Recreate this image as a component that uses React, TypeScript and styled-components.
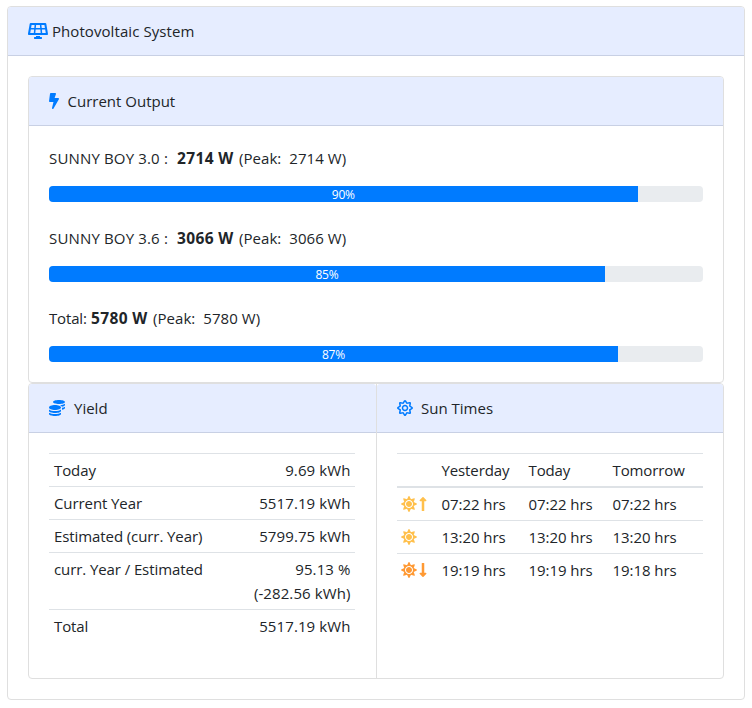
import React from 'react';
import styled, { createGlobalStyle } from 'styled-components';
import { FaBolt, FaCoins, FaLongArrowAltDown, FaLongArrowAltUp, FaRegSun, FaSolarPanel, FaSun } from 'react-icons/fa';

const GlobalStyle = createGlobalStyle`
  *, *::before, *::after { box-sizing: border-box; }
  body {
    margin: 0;
    background: #fff;
    color: #212529;
    font: 400 15px/24px "Open Sans", "Noto Sans", sans-serif;
  }
`;

const Page = styled.main`
  padding: 6px 7px 8px;
`;

const Card = styled.section`
  border: 1px solid #dfdfdf;
  border-radius: 4px;
  background: #fff;
`;

const CardGroup = styled(Card)`
  display: grid;
  grid-template-columns: 348px 1fr;
`;

const GroupPanel = styled.div`
  &:first-child {
    border-right: 1px solid #dfdfdf;
  }
`;

const CardHeader = styled.header<{ $icon: number; $gap: number }>`
  display: flex;
  align-items: center;
  gap: ${({ $gap }) => $gap}px;
  height: 49px;
  padding: 0 20px;
  border-bottom: 1px solid #c8d0e4;
  border-radius: 3px 3px 0 0;
  background: #e6edff;

  svg {
    flex: none;
    width: ${({ $icon }) => $icon}px;
    height: 16px;
    color: #007bff;
  }
`;

const CardBody = styled.div<{ $right?: number }>`
  padding: 20px ${({ $right = 20 }) => $right}px 20px 20px;
`;

const Text = styled.span<{ $track?: number }>`
  letter-spacing: ${({ $track = 0 }) => $track}px;
  white-space: pre;
`;

const Strong = styled.strong`
  width: 58px;
  font-size: 15.5px;
  font-weight: 700;
  letter-spacing: 0.35px;
  white-space: pre;
`;

const Meter = styled.div`
  & + & {
    margin-top: 24px;
  }
`;

const MeterLabel = styled.p`
  display: flex;
  align-items: baseline;
  height: 24px;
  margin: 0 0 16px;
`;

const LabelName = styled.span<{ $width: number; $track: number }>`
  width: ${({ $width }) => $width}px;
  letter-spacing: ${({ $track }) => $track}px;
  white-space: pre;
`;

const Track = styled.div`
  height: 16px;
  overflow: hidden;
  border-radius: 4px;
  background: #e9ecef;
`;

const Fill = styled.div`
  height: 16px;
  background: #007bff;
  color: #fff;
  font-size: 12px;
  line-height: 17px;
  letter-spacing: -0.2px;
  text-align: center;
`;

const YieldTable = styled.dl`
  margin: 0 0 16px;
`;

const YieldRow = styled.div`
  display: flex;
  justify-content: space-between;
  padding: 4px 4.5px 4px 4px;
  border-top: 1px solid #dee2e6;
`;

const Term = styled.dt`
  padding-left: 1px;
  letter-spacing: -0.09px;
`;

const Value = styled.dd`
  margin: 0;
  letter-spacing: 0.1px;
  text-align: right;
  white-space: pre-line;
`;

const SunRow = styled.div<{ $head?: boolean }>`
  display: grid;
  grid-template-columns: 40.5px 87px 84px 1fr;
  min-height: 33px;
  padding: 4px;
  border-top: 1px solid #dee2e6;
  ${({ $head }) => $head && 'border-bottom: 2px solid #dee2e6;'}
`;

const SunTable = styled.div`
  ${SunRow}:nth-child(2) {
    min-height: 32px;
    border-top: 0;
  }
`;

const SunIcon = styled.span<{ $color: string }>`
  display: flex;
  align-items: center;
  gap: 2px;
  color: ${({ $color }) => $color};

  svg {
    flex: none;
    width: 16px;
    height: 16px;
  }

  svg + svg {
    width: 8px;
  }
`;

const meters = [
  { name: 'SUNNY BOY 3.0 :', width: 128, track: 0.16, power: '2714 W', percent: 90 },
  { name: 'SUNNY BOY 3.6 :', width: 128, track: 0.16, power: '3066 W', percent: 85 },
  { name: 'Total:', width: 42, track: -0.15, power: '5780 W', percent: 87 },
];

const yields = [
  { term: 'Today', value: '9.69 kWh' },
  { term: 'Current Year', value: '5517.19 kWh' },
  { term: 'Estimated (curr. Year)', value: '5799.75 kWh' },
  { term: 'curr. Year / Estimated', value: '95.13 %\n(-282.56 kWh)' },
  { term: 'Total', value: '5517.19 kWh' },
];

const sunTimes = [
  { color: '#ffc04c', arrow: 'up', times: ['07:22 hrs', '07:22 hrs', '07:22 hrs'] },
  { color: '#ffc04c', arrow: '', times: ['13:20 hrs', '13:20 hrs', '13:20 hrs'] },
  { color: '#ff9933', arrow: 'down', times: ['19:19 hrs', '19:19 hrs', '19:18 hrs'] },
];

export default function App() {
  return (
    <Page>
      <GlobalStyle />
      <Card>
        <CardHeader $icon={20} $gap={4}>
          <FaSolarPanel />
          <Text $track={0.07}>Photovoltaic System</Text>
        </CardHeader>
        <CardBody>
          <Card>
            <CardHeader $icon={10} $gap={8.5}>
              <FaBolt />
              <Text>Current Output</Text>
            </CardHeader>
            <CardBody>
              {meters.map((m) => (
                <Meter key={m.name}>
                  <MeterLabel>
                    <LabelName $width={m.width} $track={m.track}>{m.name}</LabelName>
                    <Strong>{m.power}</Strong>
                    <Text $track={0.06}>{` (Peak:  ${m.power})`}</Text>
                  </MeterLabel>
                  <Track>
                    <Fill style={{ width: `${m.percent}%` }}>{m.percent}%</Fill>
                  </Track>
                </Meter>
              ))}
            </CardBody>
          </Card>
          <CardGroup>
            <GroupPanel>
              <CardHeader $icon={16} $gap={9}>
                <FaCoins />
                <Text>Yield</Text>
              </CardHeader>
              <CardBody $right={21}>
                <YieldTable>
                  {yields.map((y) => (
                    <YieldRow key={y.term}>
                      <Term>{y.term}</Term>
                      <Value>{y.value}</Value>
                    </YieldRow>
                  ))}
                </YieldTable>
              </CardBody>
            </GroupPanel>
            <GroupPanel>
              <CardHeader $icon={16} $gap={8}>
                <FaRegSun />
                <Text>Sun Times</Text>
              </CardHeader>
              <CardBody>
                <SunTable>
                  <SunRow $head>
                    <span />
                    <Text $track={-0.12}>Yesterday</Text>
                    <Text $track={-0.12}>Today</Text>
                    <Text $track={-0.12}>Tomorrow</Text>
                  </SunRow>
                  {sunTimes.map((s) => (
                    <SunRow key={s.times[2]}>
                      <SunIcon $color={s.color}>
                        <FaSun />
                        {s.arrow === 'up' && <FaLongArrowAltUp />}
                        {s.arrow === 'down' && <FaLongArrowAltDown />}
                      </SunIcon>
                      {s.times.map((t, i) => (
                        <Text key={i} $track={-0.06}>{t}</Text>
                      ))}
                    </SunRow>
                  ))}
                </SunTable>
              </CardBody>
            </GroupPanel>
          </CardGroup>
        </CardBody>
      </Card>
    </Page>
  );
}
